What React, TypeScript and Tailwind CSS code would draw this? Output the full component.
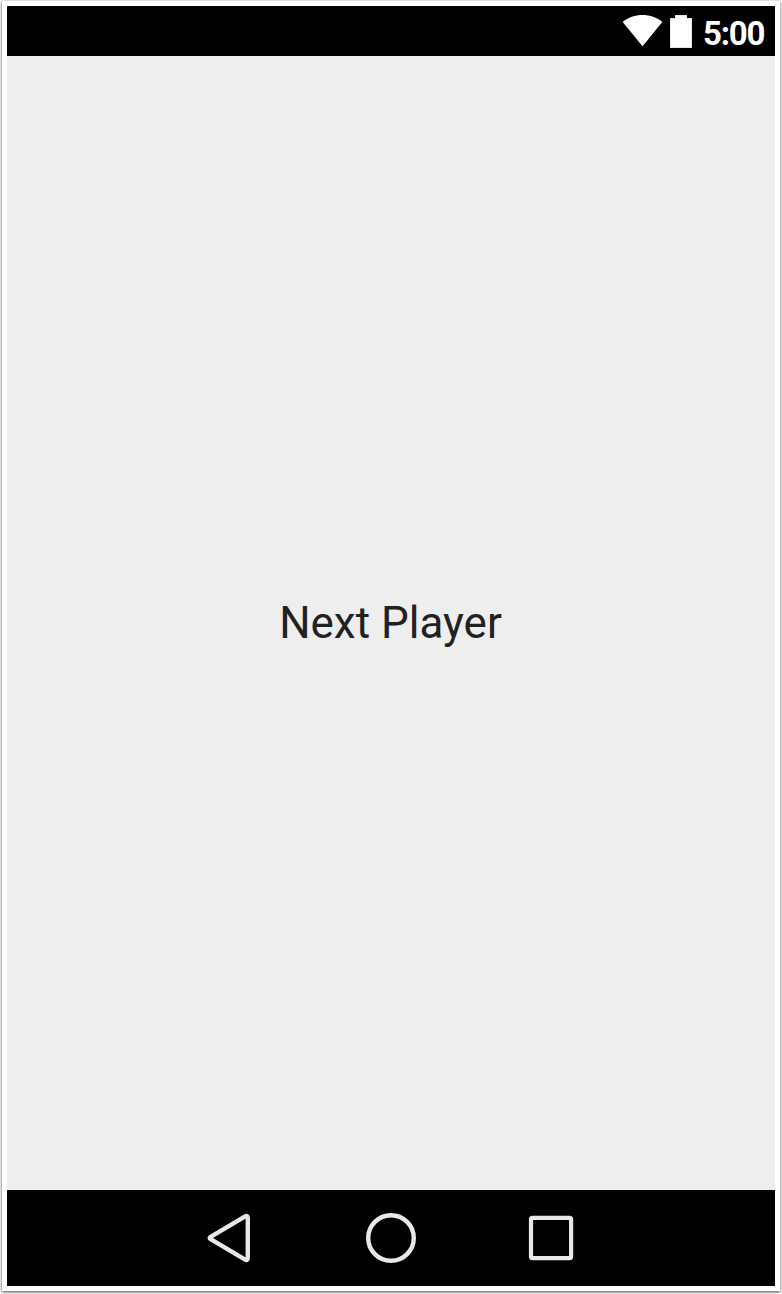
function WifiIcon() {
  return (
    <svg width="41" height="32" viewBox="0 0 41 32" fill="#fff" aria-hidden="true">
      <path d="M0.7 6.9C6.2 2.3 13 0 20.5 0S34.8 2.3 40.3 6.9L20.5 31.3Z" />
    </svg>
  );
}

function BatteryIcon() {
  return (
    <svg width="22" height="33" viewBox="0 0 22 33" aria-hidden="true">
      <path d="M0 3H5V0H17V3H22V33H0Z" fill="#e6e6e6" />
      <path d="M1 4H6V1H16V4H21V32H1Z" fill="#fff" />
    </svg>
  );
}

function StatusBar() {
  return (
    <header className="flex h-[50px] shrink-0 items-start bg-black pl-[615px] pt-[9px]">
      <WifiIcon />
      <div className="ml-[7px]">
        <BatteryIcon />
      </div>
      <span className="ml-[11px] whitespace-nowrap text-[33px] leading-[38px] font-bold tracking-[-1.2px] text-white">5:00</span>
    </header>
  );
}

function NavigationBar() {
  return (
    <nav className="flex h-24 shrink-0 items-center justify-center gap-20 bg-black">
      <button type="button" aria-label="Back">
        <svg width="80" height="80" viewBox="0 0 80 80" fill="none" stroke="#e8e8e8" strokeWidth="4.4" strokeLinejoin="round">
          <path d="M19.6 38.8L54.2 18.4Q56.8 17.1 56.8 19.9V60.1Q56.8 62.9 54.2 61.6L19.6 41.2Q17.8 40 19.6 38.8Z" />
        </svg>
      </button>
      <button type="button" aria-label="Home">
        <svg width="80" height="80" viewBox="0 0 80 80" fill="none" stroke="#e8e8e8" strokeWidth="4.4">
          <circle cx="40" cy="40" r="22.8" />
        </svg>
      </button>
      <button type="button" aria-label="Overview">
        <svg width="80" height="80" viewBox="0 0 80 80" fill="none" stroke="#e8e8e8" strokeWidth="4.2" strokeLinejoin="round">
          <rect x="20" y="19.9" width="40.1" height="40.2" rx="1.5" />
        </svg>
      </button>
    </nav>
  );
}

export default function App() {
  return (
    <div className="h-[1294px] w-[782px] bg-white pl-[2px] pt-px font-['Roboto',sans-serif]">
      <div className="flex h-[1290px] w-[778px] flex-col bg-white p-[5px] shadow-[0_1px_3px_rgba(0,0,0,0.75)]">
        <StatusBar />
        <main className="flex flex-1 items-center justify-center bg-[#eeeeee] pr-px">
          <h1 className="whitespace-nowrap text-[44px] leading-[52px] font-normal text-[#212121]">Next Player</h1>
        </main>
        <NavigationBar />
      </div>
    </div>
  );
}
